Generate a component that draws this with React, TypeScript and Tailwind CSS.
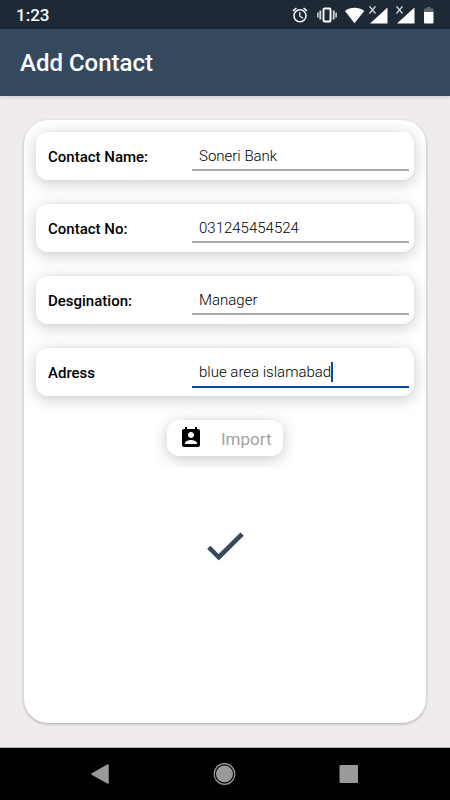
// App.tsx
import { MdAlarm, MdPermContactCalendar } from "react-icons/md";

interface Field {
  id: string;
  label: string;
  value: string;
  active?: boolean;
}

const FIELDS: Field[] = [
  { id: "name", label: "Contact Name:", value: "Soneri Bank" },
  { id: "phone", label: "Contact No:", value: "031245454524" },
  { id: "designation", label: "Desgination:", value: "Manager" },
  { id: "address", label: "Adress", value: "blue area islamabad", active: true },
];

// SIM slot without service: full triangle and a small x
function NoSignal() {
  return (
    <svg viewBox="0 0 20 18" className="w-5 h-[18px]" aria-hidden="true">
      <path d="M18.500 1.500V17.500H1z" fill="#fff" />
      <path d="M.5 .3l6 7.200M6.500 .3L.5 7.500" stroke="#d5d9dc" strokeWidth="1.300" />
    </svg>
  );
}

function StatusBar() {
  return (
    <div className="h-[29px] shrink-0 bg-[#1e2936] text-white flex items-center justify-between px-4">
      <span className="text-[17px] leading-5 font-medium">1:23</span>
      <div className="flex items-center">
        <MdAlarm className="size-[18px] mr-2" />
        <svg viewBox="0 0 20 18" className="w-5 h-[18px] mr-2" aria-hidden="true">
          <rect x="6.500" y="2.500" width="7" height="13" rx="1" fill="none" stroke="#fff" strokeWidth="1.900" />
          <path d="M3.300 4.500v9M16.700 4.500v9" stroke="#d5d9dc" strokeWidth="1.800" />
          <path d="M.9 6.500v5M19.100 6.500v5" stroke="#d5d9dc" strokeWidth="1.500" />
        </svg>
        <svg viewBox="0 0 20 18" className="w-5 h-[18px] mr-1" aria-hidden="true">
          <path d="M9.500 17.300L0 5C2.700 2.800 6 1.700 9.500 1.700S16.500 2.800 19.200 5z" fill="#fff" />
        </svg>
        <NoSignal />
        <span className="w-[7px]" />
        <NoSignal />
        <svg viewBox="0 0 10 18" className="w-2.5 h-[18px] ml-2" aria-hidden="true">
          <path d="M3 1h3.500v1.500h3v3.500H0V2.500h3z" fill="#5e6871" />
          <path d="M0 6h9.500v10.500a1 1 0 0 1-1 1H1a1 1 0 0 1-1-1z" fill="#fff" />
        </svg>
      </div>
    </div>
  );
}

function FieldRow({ id, label, value, active }: Field) {
  return (
    <div className="h-12 bg-white rounded-xl flex pl-3 pr-[5px] shadow-[0_3px_16px_rgba(0,0,0,0.22)]">
      <label htmlFor={id} className="w-36 shrink-0 self-center pt-px text-[15px] leading-5 font-medium text-black">
        {label}
      </label>
      <div className="relative flex-1 min-w-0">
        <input
          id={id}
          type="text"
          defaultValue={value}
          className={
            active
              ? "w-full h-10 pt-2.5 px-[7px] text-[15px] text-black font-light border-b-2 border-[#0b4a9c] outline-none"
              : "w-full h-[39px] pt-2.5 px-[7px] text-[15px] text-black font-light border-b-2 border-[#a8a8a8] outline-none"
          }
        />
        {active && <span className="absolute left-[139px] top-3.5 w-0.5 h-5 bg-[#0b4a9c]" />}
      </div>
    </div>
  );
}

export default function App() {
  return (
    <div className="min-h-screen flex flex-col bg-[#f0ecec] font-[Roboto,sans-serif]">
      <StatusBar />
      <header className="h-[67px] shrink-0 bg-[#34495e] flex items-center px-5 shadow-[0_1px_4px_rgba(0,0,0,0.15)]">
        <h1 className="text-[24px] leading-8 font-medium text-white">Add Contact</h1>
      </header>

      <main className="flex-1 flex flex-col p-6">
        <form
          className="flex-1 bg-white rounded-3xl overflow-hidden flex flex-col items-center shadow-[0_1px_3px_rgba(0,0,0,0.3)]"
          onSubmit={(e) => e.preventDefault()}
        >
          <div className="w-full flex flex-col gap-6 p-3">
            {FIELDS.map((f) => (
              <FieldRow key={f.id} {...f} />
            ))}
          </div>

          <div className="p-3 overflow-hidden">
            <button
              type="button"
              className="h-9 w-[116px] bg-white rounded-xl flex items-center pl-3 shadow-[0_3px_16px_rgba(0,0,0,0.22)]"
            >
              <MdPermContactCalendar className="size-6 text-black" />
              <span className="ml-[18px] pt-0.5 text-[17px] leading-6 text-[#a3a3a3]">Import</span>
            </button>
          </div>

          <button type="submit" aria-label="Save contact" className="mt-[53px]">
            <svg viewBox="0 0 24 24" className="size-[50px]">
              <path d="M4.200 12.600L9 17.400 20.200 6.300" fill="none" stroke="#34495e" strokeWidth="2.200" />
            </svg>
          </button>
        </form>
      </main>

      <nav className="h-[53px] shrink-0 bg-black border-t border-[#b5b3b3] flex items-center justify-center gap-[98px]">
        <button type="button" aria-label="Back">
          <svg viewBox="0 0 26 26" className="size-[26px]">
            <path d="M20 4v18L4 13z" fill="#9a9a9a" stroke="#9a9a9a" strokeWidth="1.500" strokeLinejoin="round" />
          </svg>
        </button>
        <button type="button" aria-label="Home">
          <svg viewBox="0 0 26 26" className="size-[26px]">
            <circle cx="12.500" cy="13" r="10.300" fill="none" stroke="#9a9a9a" strokeWidth="1.200" />
            <circle cx="12.500" cy="13" r="8.500" fill="#9a9a9a" />
          </svg>
        </button>
        <button type="button" aria-label="Recent apps">
          <svg viewBox="0 0 26 26" className="size-[26px]">
            <rect x="3.500" y="4" width="18.500" height="18" rx="1" fill="#9a9a9a" />
          </svg>
        </button>
      </nav>
    </div>
  );
}
